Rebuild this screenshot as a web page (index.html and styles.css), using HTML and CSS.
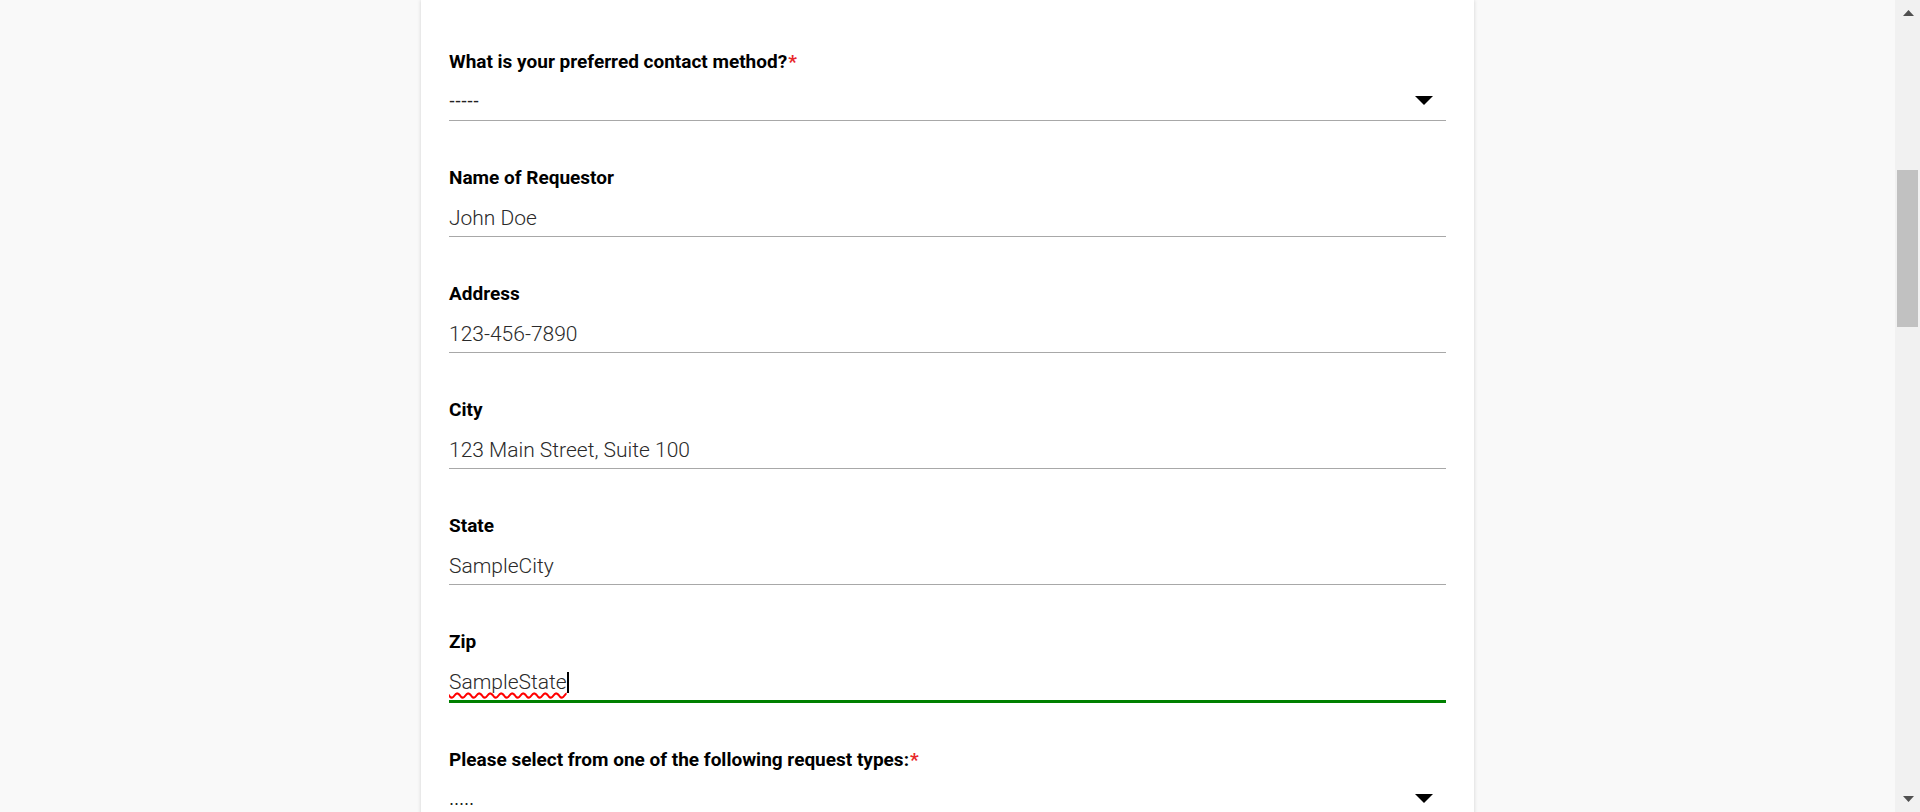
FILE: index.html
```html
<!DOCTYPE html>
<html lang="en">
<head>
<meta charset="utf-8">
<title>Request Form</title>
<link rel="stylesheet" href="styles.css">
</head>
<body>
<div class="viewport">
  <main class="page">
    <form class="card">
      <div class="field">
        <label class="label">What is your preferred contact method?<span class="req">*</span></label>
        <div class="select">
          <span class="select-value">-----</span>
          <svg class="caret" width="18" height="9" viewBox="0 0 18 9"><polygon points="0,0 18,0 9,9" fill="#000"/></svg>
        </div>
      </div>
      <div class="field">
        <label class="label">Name of Requestor</label>
        <div class="input">John Doe</div>
      </div>
      <div class="field">
        <label class="label">Address</label>
        <div class="input">123-456-7890</div>
      </div>
      <div class="field">
        <label class="label">City</label>
        <div class="input">123 Main Street, Suite 100</div>
      </div>
      <div class="field">
        <label class="label">State</label>
        <div class="input">SampleCity</div>
      </div>
      <div class="field">
        <label class="label">Zip</label>
        <div class="input focused"><span class="misspelled">SampleState</span><span class="cursor"></span></div>
      </div>
      <div class="field">
        <label class="label">Please select from one of the following request types:<span class="req">*</span></label>
        <div class="select">
          <span class="select-value">.....</span>
          <svg class="caret" width="18" height="9" viewBox="0 0 18 9"><polygon points="0,0 18,0 9,9" fill="#000"/></svg>
        </div>
      </div>
    </form>
  </main>
  <div class="scrollbar">
    <svg class="sb-arrow" width="11" height="6" viewBox="0 0 11 6"><polygon points="5.5,0 11,6 0,6" fill="#505050"/></svg>
    <div class="sb-track"><div class="sb-thumb"></div></div>
    <svg class="sb-arrow" width="11" height="6" viewBox="0 0 11 6"><polygon points="0,0 11,0 5.5,6" fill="#505050"/></svg>
  </div>
</div>
</body>
</html>
```

FILE: styles.css
```css
* { box-sizing: border-box; }
html, body {
  margin: 0;
  padding: 0;
  height: 100%;
  overflow: hidden;
}
body {
  background: #f9f9f9;
  font-family: Roboto, "Liberation Sans", Arial, sans-serif;
  color: #000;
}
.viewport {
  display: flex;
  height: 812px;
}
.page {
  flex: 1;
  display: flex;
  justify-content: center;
  overflow: hidden;
}
.card {
  width: 1053px;
  background: #fff;
  box-shadow: 0 0 4px rgba(0, 0, 0, 0.16);
  padding: 52px 28px 0 28px;
  height: 900px;
}
.field {
  display: flex;
  flex-direction: column;
  margin-bottom: 47px;
}
.label {
  display: block;
  font-size: 19px;
  font-weight: 700;
  line-height: 20px;
  height: 20px;
  color: #000;
}
.req {
  color: #e8272a;
  font-size: 19px;
  font-weight: 700;
  margin-left: 1px;
}
.select {
  margin-top: 8px;
  height: 41px;
  border-bottom: 1px solid #a8a8a8;
  display: flex;
  align-items: center;
  justify-content: space-between;
  padding-right: 13px;
}
.select-value {
  font-family: "Liberation Sans", Arial, sans-serif;
  font-size: 18px;
  color: #222;
  padding-top: 2px;
}
.caret { display: block; margin-top: 0; }
.input {
  margin-top: 8px;
  height: 41px;
  border-bottom: 1px solid #a8a8a8;
  font-size: 21px;
  font-weight: 300;
  color: #2a2a2a;
  display: flex;
  align-items: center;
  padding-top: 4px;
}
.input.focused {
  border-bottom: 3px solid #008000;
  height: 43px;
}
.misspelled {
  text-decoration-line: underline;
  text-decoration-style: wavy;
  text-decoration-color: #ff0000;
  text-decoration-skip-ink: none;
  text-underline-offset: 3px;
}
.cursor {
  display: inline-block;
  width: 2px;
  height: 21px;
  background: #000;
  margin-left: 0;
}
.scrollbar {
  width: 25px;
  flex: none;
  background: #f1f1f1;
  display: flex;
  flex-direction: column;
  align-items: center;
  padding: 10px 0 10px 2px;
}
.sb-arrow { display: block; flex: none; }
.sb-track {
  flex: 1;
  width: 100%;
  padding: 154px 2px 0 0;
}
.sb-thumb {
  height: 157px;
  background: #c1c1c1;
}
```
